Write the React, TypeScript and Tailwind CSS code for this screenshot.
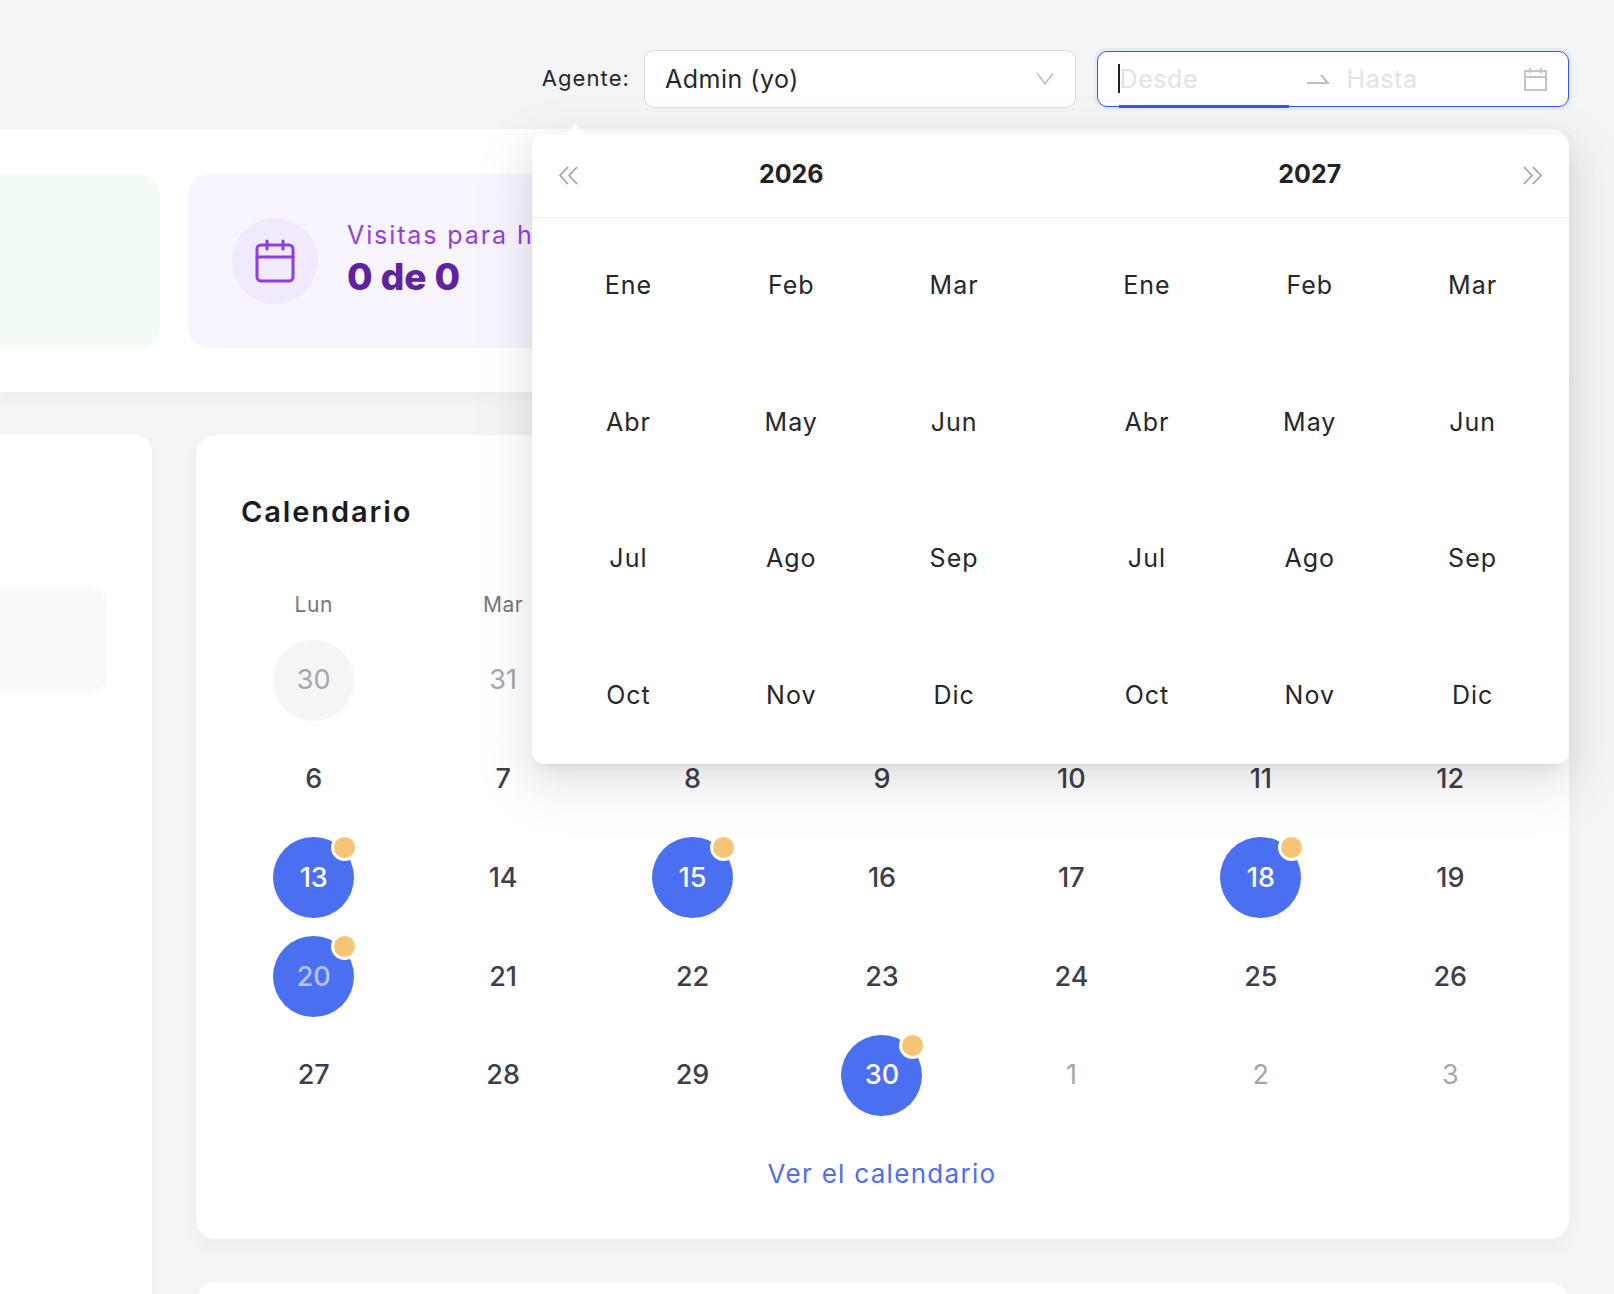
import React from "react";

const font = "[font-family:Inter,'Liberation_Sans',sans-serif]";

const weekDays = ["Lun", "Mar", "Mié", "Jue", "Vie", "Sáb", "Dom"];
const months = ["Ene", "Feb", "Mar", "Abr", "May", "Jun", "Jul", "Ago", "Sep", "Oct", "Nov", "Dic"];

type Day = { n: number; muted?: boolean; today?: boolean; event?: boolean; faded?: boolean };

const days: Day[] = [
  { n: 30, muted: true, today: true },
  { n: 31, muted: true },
  { n: 1 },
  { n: 2 },
  { n: 3 },
  { n: 4 },
  { n: 5 },
  { n: 6 },
  { n: 7 },
  { n: 8 },
  { n: 9 },
  { n: 10 },
  { n: 11 },
  { n: 12 },
  { n: 13, event: true },
  { n: 14 },
  { n: 15, event: true },
  { n: 16 },
  { n: 17 },
  { n: 18, event: true },
  { n: 19 },
  { n: 20, event: true, faded: true },
  { n: 21 },
  { n: 22 },
  { n: 23 },
  { n: 24 },
  { n: 25 },
  { n: 26 },
  { n: 27 },
  { n: 28 },
  { n: 29 },
  { n: 30, event: true },
  { n: 1, muted: true },
  { n: 2, muted: true },
  { n: 3, muted: true },
];

const DayCell = ({ day }: { day: Day }) => {
  let tone = "text-[#3f3d4d] font-medium";
  if (day.muted) tone = "text-[#a5a5ae] font-normal";
  if (day.event) tone = "bg-[#4a6ff1] text-white font-medium";
  if (day.faded) tone = "bg-[#4a6ff1] text-[#b4c6f8] font-medium";
  if (day.today) tone = "bg-[#f5f5f6] text-[#a5a5ae] font-normal";
  return (
    <div className="flex h-[98.8px] items-center justify-center">
      <div className={`relative flex size-[81px] items-center justify-center rounded-full text-[27px] ${tone}`}>
        {day.n}
        {day.event && (
          <span className="absolute right-[-1px] top-0 size-[21px] rounded-full bg-[#f5c575] shadow-[0_0_0_3px_#fff]" />
        )}
      </div>
    </div>
  );
};

const YearPanel = () => (
  <div className="grid flex-1 grid-cols-3 grid-rows-4 px-[15px]">
    {months.map((m) => (
      <div key={m} className="flex items-center justify-center text-[25px] tracking-[1px] text-[#26262b]">
        {m}
      </div>
    ))}
  </div>
);

const DoubleChevron = ({ right }: { right?: boolean }) => (
  <svg width="21" height="19" viewBox="0 0 21 19" fill="none" stroke="#9a9a9a" strokeWidth="1.5" className={`shrink-0 ${right ? "rotate-180" : ""}`}>
    <path d="M10 1 2 9.5 10 18" />
    <path d="M19 1 11 9.5 19 18" />
  </svg>
);

const DatePopup = () => (
  <div className="absolute left-[532px] top-[134px] flex h-[630px] w-[1037px] flex-col rounded-[12px] bg-white shadow-[0_12px_32px_rgba(0,0,0,0.08),0_6px_12px_-8px_rgba(0,0,0,0.12),0_18px_56px_16px_rgba(0,0,0,0.05)]">
    <div className="absolute left-[33px] top-[-10px] h-[10px] w-[20px] bg-white [clip-path:polygon(50%_0,100%_100%,0_100%)]" />
    <div className="relative flex h-[83.5px] shrink-0 items-center border-b border-[#ececec] text-center text-[25px] font-bold text-[#222226]">
      <div className="absolute left-[26px] top-[32px]">
        <DoubleChevron />
      </div>
      <span className="mb-[2px] w-1/2">2026</span>
      <span className="mb-[2px] w-1/2">2027</span>
      <div className="absolute right-[26px] top-[32px]">
        <DoubleChevron right />
      </div>
    </div>
    <div className="flex flex-1">
      <YearPanel />
      <YearPanel />
    </div>
  </div>
);

const CalendarIcon = () => (
  <svg width="48" height="48" viewBox="0 0 24 24" fill="none" stroke="#8b3fe8" strokeWidth="1.5" strokeLinecap="round" strokeLinejoin="round">
    <rect x="3" y="4" width="18" height="18" rx="2" />
    <path d="M8 2v4M16 2v4M3 10h18" />
  </svg>
);

export default function App() {
  return (
    <div className={`relative h-[1294px] w-[1614px] overflow-hidden bg-[#f3f4f6] ${font}`}>
      <header className="flex h-[129px] items-start justify-end gap-[21px] pr-[45px] pt-[50px]">
        <div className="flex items-center gap-[14px]">
          <span className="text-[22px] tracking-[1.1px] text-[#26262b]">Agente:</span>
          <div className="flex h-[57.5px] w-[432px] items-center justify-between rounded-[10px] border border-[#d9d9d9] bg-white pl-[20px] pr-[21px] text-[25px] tracking-[0.5px] text-[#26262b]">
            <span className="pt-[2px]">Admin (yo)</span>
            <svg width="18" height="13" viewBox="0 0 18 13" fill="none" stroke="#bdbdbd" strokeWidth="1.5" className="shrink-0">
              <path d="M1 1l8 11 8-11" />
            </svg>
          </div>
        </div>
        <div className="relative mt-[1px] flex h-[56px] w-[472px] items-center rounded-[10px] border border-[#3358f0] bg-white pl-[21.5px] pr-[21px] text-[25px] text-[#e3e3e3] shadow-[0_0_0_3px_rgba(51,88,240,0.06)]">
          <span className="absolute left-[20px] top-[12px] h-[29px] w-[2px] bg-[#222]" />
          <span className="w-[187px] pt-[2px] tracking-[0.6px]">Desde</span>
          <svg width="22" height="10" viewBox="0 0 22 10" fill="none" stroke="#bfbfbf" strokeWidth="2" className="shrink-0">
            <path d="M0 9h21L14 1" />
          </svg>
          <span className="ml-[18px] flex-1 pt-[2px] tracking-[0.6px]">Hasta</span>
          <svg width="23" height="23" viewBox="0 0 23 23" fill="none" stroke="#c4c4c4" strokeWidth="2" className="shrink-0">
            <rect x="1" y="3" width="21" height="19" />
            <path d="M1 9h21M6 0v5M17 0v5" />
          </svg>
          <span className="absolute bottom-[-2px] left-[21px] h-[3.5px] w-[170px] bg-[#3358f0]" />
        </div>
      </header>

      <main className="mr-[45px]">
        <section className="flex h-[263px] gap-[28px] rounded-r-[18px] bg-white py-[44.5px] shadow-[0_6px_16px_rgba(0,0,0,0.03)]">
          <div className="w-[160px] shrink-0 rounded-r-[22px] bg-[#f2fcf4]" />
          <div className="flex flex-1 items-center gap-[29px] rounded-[22px] bg-[#f7f4fd] pl-[44px]">
            <div className="flex size-[86px] items-center justify-center rounded-full bg-[#f1e9fd]">
              <CalendarIcon />
            </div>
            <div className="mb-[5px]">
              <div className="text-[25px] tracking-[1.9px] text-[#8f3fe9]">Visitas para hoy</div>
              <div className="text-[37px] font-extrabold leading-[44px] text-[#5f22a0]">0 de 0</div>
            </div>
          </div>
        </section>

        <div className="mt-[43px] flex gap-[44px]">
          <aside className="h-[900px] w-[152px] shrink-0 rounded-r-[18px] bg-white pt-[151px] shadow-[0_6px_16px_rgba(0,0,0,0.02)]">
            <div className="h-[108px] w-[107px] rounded-r-[20px] bg-[#f9f9fa]" />
          </aside>
          <div className="flex-1">
            <section className="h-[804px] rounded-[20px] bg-white pl-[23px] pr-[24px] pt-[59px] shadow-[0_8px_20px_rgba(0,0,0,0.03)]">
              <h2 className="pl-[22px] text-[29px] font-semibold leading-[36px] tracking-[1.9px] text-[#1a1a1f]">Calendario</h2>
              <div className="mt-[61px] grid grid-cols-7">
                {weekDays.map((d) => (
                  <div key={d} className="text-center text-[21px] leading-[28px] tracking-[0.5px] text-[#76767e]">
                    {d}
                  </div>
                ))}
              </div>
              <div className="mt-[12px] grid grid-cols-7">
                {days.map((d, i) => (
                  <DayCell key={i} day={d} />
                ))}
              </div>
              <div className="mt-[33px] text-center text-[26px] leading-[32px] tracking-[1.3px] text-[#4a6ff1]">Ver el calendario</div>
            </section>
            <section className="mt-[43px] h-[200px] rounded-[20px] bg-white" />
          </div>
        </div>
      </main>

      <DatePopup />
    </div>
  );
}
